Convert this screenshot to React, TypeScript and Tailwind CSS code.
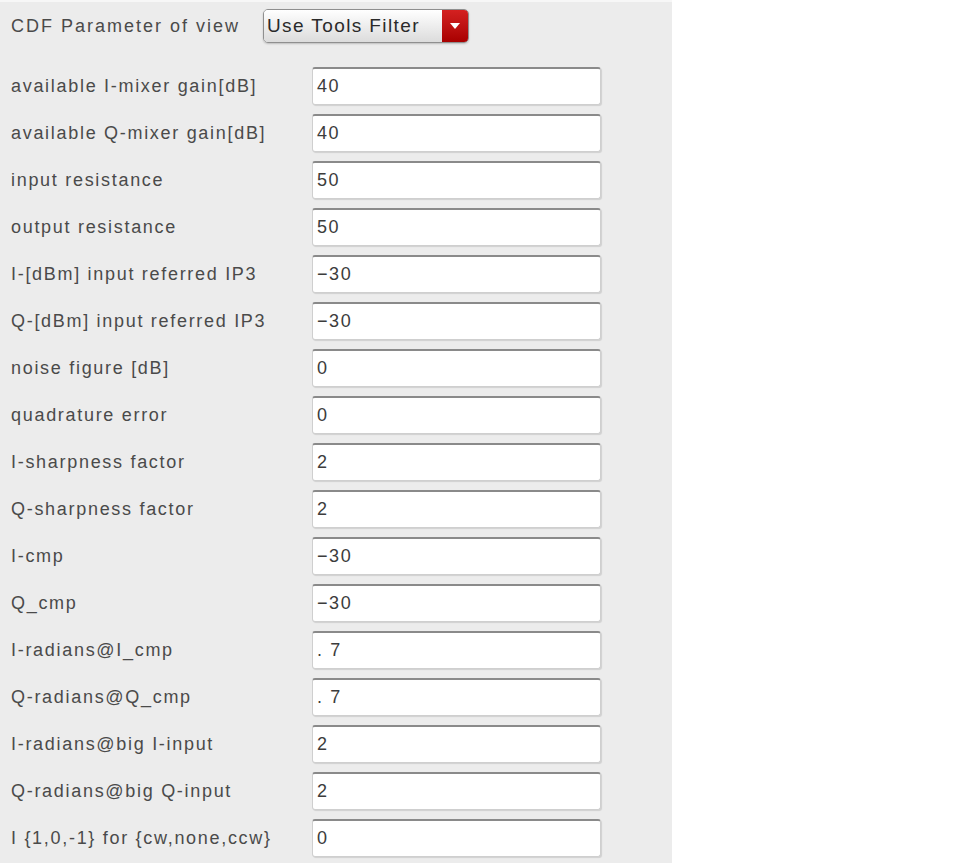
const ROWS: [string, string][] = [
  ['available I-mixer gain[dB]', '40'],
  ['available Q-mixer gain[dB]', '40'],
  ['input resistance', '50'],
  ['output resistance', '50'],
  ['I-[dBm] input referred IP3', '−30'],
  ['Q-[dBm] input referred IP3', '−30'],
  ['noise figure [dB]', '0'],
  ['quadrature error', '0'],
  ['I-sharpness factor', '2'],
  ['Q-sharpness factor', '2'],
  ['I-cmp', '−30'],
  ['Q_cmp', '−30'],
  ['I-radians@I_cmp', '. 7'],
  ['Q-radians@Q_cmp', '. 7'],
  ['I-radians@big I-input', '2'],
  ['Q-radians@big Q-input', '2'],
  ['I {1,0,-1} for {cw,none,ccw}', '0'],
];

const font = "font-['Liberation_Sans',Arial,sans-serif]";

const ParamRow = ({ label, value }: { label: string; value: string }) => (
  <div className="flex items-center h-[38px]">
    <span className={`w-[312px] pl-[11px] text-[18px] tracking-[1.7px] text-[#4a4a4a] ${font}`}>{label}</span>
    <div className="w-[289px] h-[38px] bg-white rounded-[3px] border border-[#cfcfcf] border-t-2 border-t-[#8a8a8a] shadow-[1px_1px_1px_rgba(0,0,0,0.12)] flex items-center pl-[4px]">
      <span className={`text-[18px] tracking-[1.6px] text-[#3c3c3c] ${font}`}>{value}</span>
    </div>
  </div>
);

export default function App() {
  return (
    <div className="w-[959px] h-[863px] bg-white">
      <div className="w-[672px] h-[863px] bg-[#ececec] border-t-2 border-t-[#f7f7f7] flex flex-col">
        {/* view selector */}
        <div className="flex items-center pt-[7px] h-[41px] mb-[24px]">
          <span className={`w-[263px] pl-[11px] text-[18px] tracking-[2px] text-[#4a4a4a] ${font}`}>CDF Parameter of view</span>
          <div className="flex h-[34px] w-[206px] rounded-[5px] border border-[#8f8f8f] overflow-hidden shadow-[0_1px_2px_rgba(0,0,0,0.2)]">
            <div className="flex-1 bg-gradient-to-b from-white to-[#dcdcdc] flex items-center pl-[3px]">
              <span className={`text-[19px] tracking-[1.4px] text-[#2a2a2a] ${font}`}>Use Tools Filter</span>
            </div>
            <div className="w-[26px] bg-gradient-to-b from-[#d42020] to-[#a80000] flex items-center justify-center">
              <svg width="10" height="6" viewBox="0 0 10 6">
                <path d="M0 0 H10 L5 6 Z" fill="#fff" />
              </svg>
            </div>
          </div>
        </div>
        <div className="flex flex-col gap-[9px]">
          {ROWS.map(([l, v]) => (
            <ParamRow key={l} label={l} value={v} />
          ))}
        </div>
      </div>
    </div>
  );
}
